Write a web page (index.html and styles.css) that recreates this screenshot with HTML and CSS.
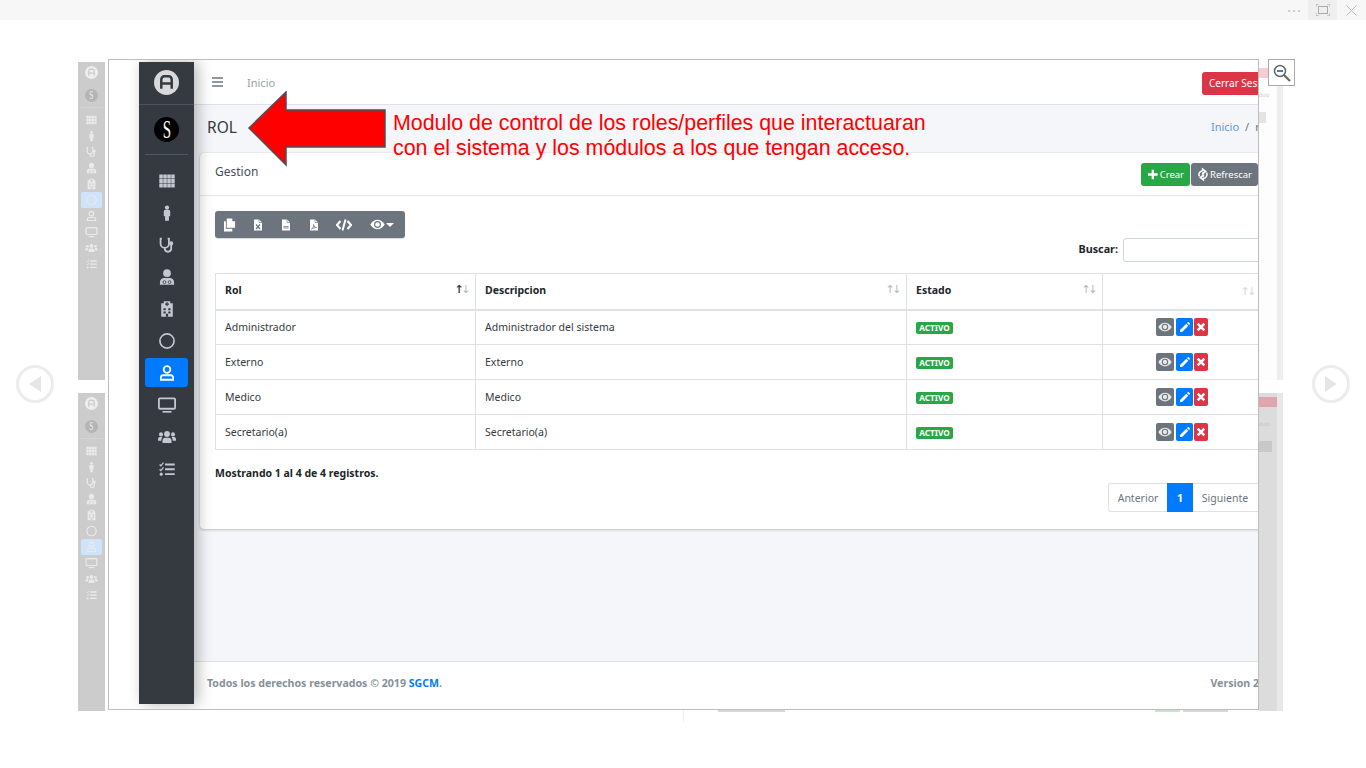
FILE: index.html
```html
<!DOCTYPE html>
<html lang="en">

<head>
  <meta charset="UTF-8">
  <meta name="viewport" content="width=device-width, initial-scale=1.0">
  <title>Rol</title>
  <link rel="stylesheet" href="styles.css">
</head>

<body>
  <svg class="defs" width="0" height="0">
    <symbol id="i-th" viewBox="-2 -2 28 28"><path d="M0 2h5.500v6.200H0zM6.200 2h5.500v6.200H6.200zM12.400 2h5.500v6.200h-5.500zM18.600 2H24v6.200h-5.400zM0 8.900h5.500v6.200H0zM6.200 8.900h5.500v6.200H6.200zM12.400 8.900h5.500v6.200h-5.500zM18.600 8.900H24v6.200h-5.400zM0 15.800h5.500V22H0zM6.200 15.800h5.500V22H6.200zM12.400 15.800h5.500V22h-5.500zM18.600 15.800H24V22h-5.400z" fill="currentColor"/></symbol>
    <symbol id="i-male" viewBox="-2 -2 28 28"><circle cx="12" cy="3.500" r="3.300" fill="currentColor"/><path d="M7 9.500a2.500 2.500 0 0 1 2.500-2.500h5A2.500 2.500 0 0 1 17 9.500V17h-2v7H9v-7H7z" fill="currentColor"/></symbol>
    <symbol id="i-steth" viewBox="-2 -2 28 28"><path d="M4 2H2v8a6.500 6.500 0 0 0 13 0V2h-2M8.500 16.500v1a5 5 0 0 0 10 0V12" fill="none" stroke="currentColor" stroke-width="2.800"/><circle cx="18.500" cy="9.500" r="3.200" fill="currentColor"/></symbol>
    <symbol id="i-md" viewBox="-2 -2 28 28"><circle cx="12" cy="6" r="6" fill="currentColor"/><path d="M1 24v-4a6.500 6.500 0 0 1 6.500-6.500h9A6.500 6.500 0 0 1 23 20v4z" fill="currentColor"/><circle cx="8" cy="20" r="2.200" fill="none" stroke="var(--cut, #343a40)" stroke-width="1.200"/><circle cx="16" cy="20" r="2.200" fill="none" stroke="var(--cut, #343a40)" stroke-width="1.200"/></symbol>
    <symbol id="i-hosp" viewBox="-2 -2 28 28"><path d="M7 0h10v3h4v21H3V3h4z" fill="currentColor"/><path d="M11 1.500h2v6h-2zM9 3.500h6v2H9zM6.500 11h3.500v3H6.500zM14 11h3.500v3H14zM6.500 16h3.500v3H6.500zM14 16h3.500v3H14zM10.300 19.500h3.400V24h-3.400z" fill="var(--cut, #343a40)"/></symbol>
    <symbol id="i-circle" viewBox="-2 -2 28 28"><circle cx="12" cy="12" r="11" fill="none" stroke="currentColor" stroke-width="2.600"/></symbol>
    <symbol id="i-user" viewBox="-2 -2 28 28"><circle cx="12" cy="6.500" r="5.200" fill="none" stroke="currentColor" stroke-width="2.800"/><path d="M6 15.500h12a3.500 3.500 0 0 1 3.500 3.500v3.500h-19V19A3.500 3.500 0 0 1 6 15.500z" fill="none" stroke="currentColor" stroke-width="2.800"/></symbol>
    <symbol id="i-desk" viewBox="0 0 24 24"><rect x="1.200" y="3.200" width="21.600" height="13.800" rx="1.500" fill="none" stroke="currentColor" stroke-width="2.400"/><path d="M6 20h12v2.200H6z" fill="currentColor"/></symbol>
    <symbol id="i-users" viewBox="0 0 24 24"><circle cx="12" cy="8" r="3.900" fill="currentColor"/><circle cx="4" cy="8.500" r="2.700" fill="currentColor"/><circle cx="20" cy="8.500" r="2.700" fill="currentColor"/><path d="M6 20v-3a4 4 0 0 1 4-4h4a4 4 0 0 1 4 4v3zM0 17v-2.500A2.500 2.500 0 0 1 2.500 12H6a6 6 0 0 0-1.500 5zM24 17v-2.500a2.500 2.500 0 0 0-2.500-2.500H18a6 6 0 0 1 1.500 5z" fill="currentColor"/></symbol>
    <symbol id="i-tasks" viewBox="-2 -2 28 28"><path d="M0.500 5l2 2L6.500 2M0.500 12.500l2 2 4-5" fill="none" stroke="currentColor" stroke-width="2"/><path d="M9 3.500h15v3H9zM9 11h15v3H9zM9 18.500h15v3H9z" fill="currentColor"/><circle cx="3" cy="20" r="2.400" fill="currentColor"/></symbol>
    <symbol id="i-logo-a" viewBox="0 0 24 24"><circle cx="12" cy="12" r="12" fill="var(--logo-bg, #d9d9d9)"/><path d="M7 18V9a3 3 0 0 1 3-3h4a3 3 0 0 1 3 3v9M7 13h10" fill="none" stroke="var(--cut, #343a40)" stroke-width="2.400"/></symbol>
    <symbol id="i-eye" viewBox="0 0 24 24"><path d="M0.500 12C3.500 7 7.500 4.500 12 4.500S20.500 7 23.500 12C20.500 17 16.500 19.500 12 19.500S3.500 17 0.500 12z" fill="currentColor"/><circle cx="12" cy="12" r="4.600" fill="none" stroke="#6c757d" stroke-width="1.800"/></symbol>
    <symbol id="i-pen" viewBox="0 0 24 24"><path d="M2 18L14.500 5.500l4 4L6 22H2zM16 4l1.500-1.500a1.500 1.500 0 0 1 2 0l2 2a1.500 1.500 0 0 1 0 2L20 8z" fill="currentColor"/></symbol>
    <symbol id="i-x" viewBox="0 0 24 24"><path d="M4 4l16 16M20 4L4 20" fill="none" stroke="currentColor" stroke-width="6"/></symbol>
    <symbol id="i-file" viewBox="0 0 24 24"><path d="M4 1h10l6 6v16H4z" fill="currentColor"/><path d="M14 1v6h6" fill="none" stroke="#6c757d" stroke-width="1.200"/></symbol>
  </svg>

  <div class="viewer-bar">
    <span class="bar-dots">&middot;&middot;&middot;</span>
    <span class="bar-full">
      <svg width="14" height="12" viewBox="0 0 14 12"><path d="M0 3V0h3M11 0h3v3M14 9v3h-3M3 12H0V9" fill="none" stroke="#aaa"/><rect x="2.500" y="2.500" width="9" height="7" fill="none" stroke="#aaa"/></svg>
    </span>
    <span class="bar-close">
      <svg width="11" height="11" viewBox="0 0 11 11"><path d="M0.500 0.500l10 10M10.500 0.500l-10 10" stroke="#bbb"/></svg>
    </span>
  </div>

  <!-- neighbouring slides peeking out behind the open one -->
  <div class="thumb thumb-top">
    <svg class="t-logo"><use href="#i-logo-a"/></svg>
    <span class="t-s"><span>S</span></span>
    <hr class="t-rule">
    <svg class="t-ico"><use href="#i-th"/></svg>
    <svg class="t-ico"><use href="#i-male"/></svg>
    <svg class="t-ico"><use href="#i-steth"/></svg>
    <svg class="t-ico"><use href="#i-md"/></svg>
    <svg class="t-ico"><use href="#i-hosp"/></svg>
    <svg class="t-ico t-on"><use href="#i-circle"/></svg>
    <svg class="t-ico"><use href="#i-user"/></svg>
    <svg class="t-ico"><use href="#i-desk"/></svg>
    <svg class="t-ico"><use href="#i-users"/></svg>
    <svg class="t-ico"><use href="#i-tasks"/></svg>
  </div>
  <div class="thumb thumb-bottom">
    <svg class="t-logo"><use href="#i-logo-a"/></svg>
    <span class="t-s"><span>S</span></span>
    <hr class="t-rule">
    <svg class="t-ico"><use href="#i-th"/></svg>
    <svg class="t-ico"><use href="#i-male"/></svg>
    <svg class="t-ico"><use href="#i-steth"/></svg>
    <svg class="t-ico"><use href="#i-md"/></svg>
    <svg class="t-ico"><use href="#i-hosp"/></svg>
    <svg class="t-ico"><use href="#i-circle"/></svg>
    <svg class="t-ico t-on"><use href="#i-user"/></svg>
    <svg class="t-ico"><use href="#i-desk"/></svg>
    <svg class="t-ico"><use href="#i-users"/></svg>
    <svg class="t-ico"><use href="#i-tasks"/></svg>
  </div>
  <div class="side side-top">
    <span class="side-red"></span>
    <span class="side-txt">dulo</span>
    <span class="side-grey"></span>
  </div>
  <div class="side side-bottom">
    <span class="side-red"></span>
    <span class="side-txt">dulo</span>
    <span class="side-grey"></span>
  </div>
  <div class="peek peek-a"></div>
  <div class="peek peek-b"></div>
  <div class="peek peek-c"></div>
  <div class="peek peek-line"></div>

  <button class="nav-arrow nav-prev"><svg width="12" height="16" viewBox="0 0 12 16"><path d="M12 0v16L0 8z" fill="#e6e6e6"/></svg></button>
  <button class="nav-arrow nav-next"><svg width="12" height="16" viewBox="0 0 12 16"><path d="M0 0v16l12-8z" fill="#e6e6e6"/></svg></button>

  <button class="zoom-btn">
    <svg width="18" height="18" viewBox="0 0 18 18"><circle cx="7" cy="7" r="5.500" fill="#fff" stroke="#666" stroke-width="1.500"/><path d="M11 11l6 6" stroke="#666" stroke-width="2.200"/><path d="M4 7h6" stroke="#4a7ebb" stroke-width="2"/></svg>
  </button>

  <div class="frame">
    <div class="app">
      <aside class="sidebar">
        <div class="brand">
          <svg class="logo"><use href="#i-logo-a"/></svg>
        </div>
        <div class="profile">
          <span class="logo-s"><span>S</span></span>
        </div>
        <nav class="menu">
          <a class="menu-item"><svg><use href="#i-th"/></svg></a>
          <a class="menu-item"><svg><use href="#i-male"/></svg></a>
          <a class="menu-item"><svg><use href="#i-steth"/></svg></a>
          <a class="menu-item"><svg><use href="#i-md"/></svg></a>
          <a class="menu-item"><svg><use href="#i-hosp"/></svg></a>
          <a class="menu-item"><svg><use href="#i-circle"/></svg></a>
          <a class="menu-item active"><svg><use href="#i-user"/></svg></a>
          <a class="menu-item"><svg><use href="#i-desk"/></svg></a>
          <a class="menu-item"><svg><use href="#i-users"/></svg></a>
          <a class="menu-item"><svg><use href="#i-tasks"/></svg></a>
        </nav>
      </aside>

      <div class="main">
        <header class="topbar">
          <svg class="burger" width="11" height="10" viewBox="0 0 11 10"><path d="M0 1h11M0 5h11M0 9h11" stroke="#6c757d" stroke-width="1.400"/></svg>
          <a class="top-link">Inicio</a>
          <a class="btn-logout">Cerrar Sesion</a>
        </header>

        <section class="page-head">
          <h1>ROL</h1>
          <div class="crumbs"><a>Inicio</a><span class="crumb-sep">/</span><span>rol</span></div>
        </section>

        <section class="content">
          <div class="card">
            <div class="card-head">
              <h3>Gestion</h3>
              <div class="head-btns">
                <a class="btn btn-green">
                  <svg width="11" height="11" viewBox="0 0 11 11"><path d="M5.500 0v11M0 5.500h11" stroke="#fff" stroke-width="2.600"/></svg>Crear
                </a>
                <a class="btn btn-grey">
                  <svg width="13" height="15" viewBox="0 0 13 15"><path d="M2 10A5 5 0 0 1 6 2.500V0.500L10 3.500 6 6.500V4.500" fill="none" stroke="#fff" stroke-width="2"/><path d="M11 5A5 5 0 0 1 7 12.500v2L3 11.500l4-3v2" fill="none" stroke="#fff" stroke-width="2"/></svg>Refrescar
                </a>
              </div>
            </div>

            <div class="card-body">
              <div class="tools">
                <a class="tool"><svg width="12" height="14" viewBox="0 0 13 14"><path d="M3 0h6l0 3h3v7H3z" fill="#fff"/><path d="M0 3h2v8h7v3H0z" fill="#fff"/></svg></a>
                <a class="tool"><svg width="12" height="14" viewBox="0 0 24 24"><use href="#i-file"/><path d="M8 11l8 9M16 11l-8 9" stroke="#6c757d" stroke-width="2.400"/></svg></a>
                <a class="tool"><svg width="12" height="14" viewBox="0 0 24 24"><use href="#i-file"/><path d="M7 15h10M7 18h10" stroke="#6c757d" stroke-width="1.600"/></svg></a>
                <a class="tool"><svg width="12" height="14" viewBox="0 0 24 24"><use href="#i-file"/><path d="M7 20c3-1 5-6 4-9 1 4 3 6 6 6-4 0-7 1-10 3z" fill="none" stroke="#6c757d" stroke-width="1.500"/></svg></a>
                <a class="tool tool-code"><svg width="16" height="12" viewBox="0 0 16 12"><path d="M4.500 2L1 6l3.500 4M11.500 2L15 6l-3.500 4M9.500 0.500L6.500 11.500" fill="none" stroke="#fff" stroke-width="2"/></svg></a>
                <a class="tool tool-eye"><svg width="15" height="15"><use href="#i-eye"/></svg><span class="caret"></span></a>
              </div>

              <div class="search-row">
                <label for="q">Buscar:</label>
                <input type="text" id="q">
              </div>

              <table class="grid">
                <colgroup>
                  <col class="c-rol"><col class="c-desc"><col class="c-state"><col>
                </colgroup>
                <thead>
                  <tr>
                    <th>Rol<span class="sort"><b>&uarr;</b>&darr;</span></th>
                    <th>Descripcion<span class="sort">&uarr;&darr;</span></th>
                    <th>Estado<span class="sort">&uarr;&darr;</span></th>
                    <th><span class="sort sort-faint">&uarr;&darr;</span></th>
                  </tr>
                </thead>
                <tbody>
                  <tr>
                    <td>Administrador</td>
                    <td>Administrador del sistema</td>
                    <td><span class="badge">ACTIVO</span></td>
                    <td class="acts">
                      <a class="act act-grey"><svg><use href="#i-eye"/></svg></a><a class="act act-blue"><svg><use href="#i-pen"/></svg></a><a class="act act-red"><svg><use href="#i-x"/></svg></a>
                    </td>
                  </tr>
                  <tr>
                    <td>Externo</td>
                    <td>Externo</td>
                    <td><span class="badge">ACTIVO</span></td>
                    <td class="acts">
                      <a class="act act-grey"><svg><use href="#i-eye"/></svg></a><a class="act act-blue"><svg><use href="#i-pen"/></svg></a><a class="act act-red"><svg><use href="#i-x"/></svg></a>
                    </td>
                  </tr>
                  <tr>
                    <td>Medico</td>
                    <td>Medico</td>
                    <td><span class="badge">ACTIVO</span></td>
                    <td class="acts">
                      <a class="act act-grey"><svg><use href="#i-eye"/></svg></a><a class="act act-blue"><svg><use href="#i-pen"/></svg></a><a class="act act-red"><svg><use href="#i-x"/></svg></a>
                    </td>
                  </tr>
                  <tr>
                    <td>Secretario(a)</td>
                    <td>Secretario(a)</td>
                    <td><span class="badge">ACTIVO</span></td>
                    <td class="acts">
                      <a class="act act-grey"><svg><use href="#i-eye"/></svg></a><a class="act act-blue"><svg><use href="#i-pen"/></svg></a><a class="act act-red"><svg><use href="#i-x"/></svg></a>
                    </td>
                  </tr>
                </tbody>
              </table>

              <p class="info">Mostrando 1 al 4 de 4 registros.</p>

              <div class="pager">
                <a class="page-prev">Anterior</a>
                <a class="page-cur">1</a>
                <a class="page-next">Siguiente</a>
              </div>
            </div>
          </div>
        </section>

        <footer class="foot">
          <span>Todos los derechos reservados &copy; 2019 <a>SGCM</a>.</span>
          <span>Version 2.0</span>
        </footer>
      </div>
    </div>

    <svg class="callout-arrow" width="142" height="78" viewBox="0 0 142 78">
      <path d="M2 37L39 1v18h99v37H39v18z" fill="#ff0000" stroke="#4a5058" stroke-width="1.500"/>
    </svg>
    <p class="callout-text">Modulo de control de los roles/perfiles que interactuaran<br>con el sistema y los módulos a los que tengan acceso.</p>
  </div>
</body>

</html>
```

FILE: styles.css
```css
* {
  box-sizing: border-box;
}

body {
  margin: 0;
  height: 768px;
  overflow: hidden;
  position: relative;
  background: #fff;
  font-family: "Noto Sans", sans-serif;
  font-size: 11px;
  color: #212529;
}

a {
  text-decoration: none;
}

.defs {
  position: absolute;
}

/* viewer chrome */
.viewer-bar {
  height: 20px;
  background: #f7f7f7;
  display: flex;
  justify-content: flex-end;
  align-items: center;
}

.bar-dots {
  margin-right: 6px;
  color: #c4c4c4;
  font-size: 15px;
  letter-spacing: 1px;
  line-height: 20px;
}

.bar-full {
  width: 29px;
  height: 20px;
  background: #efefef;
  display: flex;
  align-items: center;
  justify-content: center;
}

.bar-close {
  width: 29px;
  height: 20px;
  display: flex;
  align-items: center;
  justify-content: center;
}

.nav-arrow {
  position: absolute;
  top: 365px;
  width: 38px;
  height: 38px;
  border: 3px solid #ececec;
  border-radius: 50%;
  background: #fff;
  padding: 0;
  display: flex;
  align-items: center;
  justify-content: center;
}

.nav-prev {
  left: 16px;
}

.nav-next {
  left: 1312px;
}

.zoom-btn {
  position: absolute;
  left: 1268px;
  top: 59px;
  width: 27px;
  height: 27px;
  background: #fff;
  border: 1px solid #aaa;
  padding: 0;
  display: flex;
  align-items: center;
  justify-content: center;
}

/* neighbouring slides */
.thumb {
  position: absolute;
  left: 78px;
  width: 27px;
  background: #cccccc;
  color: #eaeaea;
  display: flex;
  flex-direction: column;
  align-items: center;
  --logo-bg: #eeeeee;
  --cut: #cccccc;
}

.thumb-top {
  top: 62px;
  height: 318px;
  padding-top: 4px;
}

.thumb-bottom {
  top: 393px;
  height: 318px;
  padding-top: 4px;
}

.t-logo {
  width: 13px;
  height: 13px;
  margin-bottom: 10px;
}

.t-s {
  width: 13px;
  height: 13px;
  line-height: 13px;
  border-radius: 50%;
  background: #b5b5b5;
  color: #eee;
  font-family: "Liberation Serif", serif;
  font-size: 12px;
  text-align: center;
}

.t-s span {
  display: inline-block;
  transform: scaleX(0.6);
}

.t-rule {
  width: 22px;
  margin: 5px 0 4px;
  border: 0;
  border-top: 1px solid #d4d4d4;
}

.t-ico {
  width: 21px;
  height: 16px;
  padding: 2px 4px;
  flex: none;
  border-radius: 2px;
}

.t-on {
  background: #cfe3fb;
}

.side {
  position: absolute;
  left: 1259px;
  width: 24px;
  height: 318px;
  border-right: 6px solid #eeeeee;
}

.side-top {
  top: 62px;
  background: #fdfdfd;
}

.side-bottom {
  top: 393px;
  background: #dcdcdc;
  border-right-color: #e8e8e8;
}

.side-red {
  display: block;
  width: 9px;
  height: 10px;
  margin-top: 6px;
  background: #f6cdd2;
}

.side-bottom .side-red {
  width: 18px;
  margin-top: 4px;
  background: #dfa5ac;
}

.side-txt {
  display: block;
  margin-top: 14px;
  font-size: 5px;
  line-height: 7px;
  color: #ccc;
}

.side-grey {
  display: block;
  width: 7px;
  height: 11px;
  margin-top: 13px;
  background: #e4e4e4;
}

.side-bottom .side-txt {
  color: #c4c4c4;
}

.side-bottom .side-grey {
  width: 13px;
  background: #c8c8c8;
}

.peek {
  position: absolute;
  top: 710px;
  height: 2px;
  background: #d8d8d8;
}

.peek-a {
  left: 718px;
  width: 67px;
}

.peek-b {
  left: 1155px;
  width: 25px;
  background: #c5e6cd;
}

.peek-c {
  left: 1183px;
  width: 45px;
}

.peek-line {
  left: 683px;
  width: 1px;
  height: 12px;
  background: #f0f0f0;
}

/* open slide */
.frame {
  position: absolute;
  left: 108px;
  top: 59px;
  width: 1151px;
  height: 651px;
  border: 1px solid #bdbdbd;
  background: #fff;
  overflow: hidden;
  padding: 2px 0 5px 30px;
}

.app {
  display: flex;
  height: 100%;
}

.sidebar {
  flex: 0 0 55px;
  background: #343a40;
  position: relative;
  z-index: 2;
  box-shadow: 4px 0 14px rgba(0, 0, 0, 0.28);
  color: #c2c7d0;
}

.brand {
  height: 43px;
  padding-bottom: 2px;
  border-bottom: 1px solid #4b545c;
  display: flex;
  align-items: center;
  justify-content: center;
}

.logo {
  width: 25px;
  height: 25px;
}

.profile {
  height: 50px;
  margin: 0 6px;
  border-bottom: 1px solid #4f5962;
  display: flex;
  align-items: center;
  justify-content: center;
}

.logo-s {
  width: 25px;
  height: 25px;
  line-height: 25px;
  border-radius: 50%;
  background: #000;
  color: #fff;
  font-family: "Liberation Serif", serif;
  font-size: 25px;
  text-align: center;
}

.logo-s span {
  display: inline-block;
  transform: scaleX(0.6);
}

.menu {
  padding: 11px 6px 0;
  display: flex;
  flex-direction: column;
  gap: 3px;
}

.menu-item {
  height: 29px;
  border-radius: 3px;
  display: flex;
  align-items: center;
  justify-content: center;
}

.menu-item svg {
  width: 18px;
  height: 18px;
}

.menu-item.active {
  background: #007bff;
  color: #fff;
}

.main {
  flex: 0 0 1089px;
  display: flex;
  flex-direction: column;
  background: #f4f6f9;
}

.topbar {
  height: 43px;
  flex: none;
  background: #fff;
  border-bottom: 1px solid #dee2e6;
  padding: 0 6px 0 18px;
  display: flex;
  align-items: center;
}

.burger {
  margin-top: -2px;
}

.top-link {
  margin: -2px 0 0 24px;
  color: #9a9fa5;
  font-size: 11px;
}

.btn-logout {
  margin-left: auto;
  padding: 0 7px;
  height: 23px;
  line-height: 23px;
  width: 75px;
  background: #dc3545;
  color: #fff;
  border-radius: 3px;
  font-size: 10px;
  white-space: nowrap;
}

.page-head {
  height: 48px;
  flex: none;
  padding: 0 14px 4px 13px;
  display: flex;
  align-items: center;
  justify-content: space-between;
}

.page-head h1 {
  margin: 0;
  font-size: 15.500px;
  font-weight: 400;
  color: #343a40;
}

.crumbs {
  margin-top: -1px;
  color: #6c757d;
  font-size: 11px;
  white-space: nowrap;
}

.crumbs a {
  color: #5b96ee;
}

.crumb-sep {
  margin: 0 6px;
}

.content {
  flex: 1;
  padding: 0 6px;
}

.card {
  background: #fff;
  border-radius: 4px;
  box-shadow: 0 0 1px rgba(0, 0, 0, 0.2), 0 1px 3px rgba(0, 0, 0, 0.2);
}

.card-head {
  height: 43px;
  padding: 10px 19px 0 15px;
  border-bottom: 1px solid #e4e6e9;
  display: flex;
  justify-content: space-between;
  align-items: flex-start;
}

.card-head h3 {
  margin: 0;
  font-size: 12px;
  font-weight: 400;
  line-height: 17px;
  color: #495057;
}

.head-btns {
  display: flex;
  gap: 1px;
}

.btn {
  height: 23px;
  border-radius: 3px;
  color: #fff;
  font-size: 9.500px;
  display: flex;
  align-items: center;
  gap: 2px;
  padding: 0 6px;
}

.btn-green {
  width: 49px;
  background: #28a745;
  padding-left: 7px;
}

.btn-grey {
  width: 67px;
  background: #6c757d;
  padding-left: 7px;
}

.card-body {
  padding: 15px 15px 17px;
}

.tools {
  width: 190px;
  height: 27px;
  background: #6c757d;
  border-radius: 3px;
  padding-left: 9px;
  display: flex;
  align-items: center;
  color: #fff;
  box-shadow: 0 1px 1px rgba(0, 0, 0, 0.15);
}

.tool {
  width: 28px;
  display: flex;
  align-items: center;
  color: #fff;
}

.tool-code {
  width: 34px;
}

.tool-eye {
  width: 30px;
}

.caret {
  margin-left: 1px;
  border-left: 4px solid transparent;
  border-right: 4px solid transparent;
  border-top: 4px solid #fff;
}

.search-row {
  height: 24px;
  margin-bottom: 11px;
  display: flex;
  justify-content: flex-end;
  align-items: center;
  gap: 5px;
}

.search-row label {
  margin-top: -3px;
  font-weight: 700;
  font-size: 10.800px;
}

.search-row input {
  width: 139px;
  height: 24px;
  border: 1px solid #ced4da;
  border-radius: 3px;
}

.grid {
  width: 1047px;
  table-layout: fixed;
  border-collapse: collapse;
  border: 1px solid #dee2e6;
}

.c-rol {
  width: 260px;
}

.c-desc {
  width: 431px;
}

.c-state {
  width: 196px;
}

.grid th,
.grid td {
  border: 1px solid #dee2e6;
  padding: 0 9px;
  text-align: left;
  white-space: nowrap;
}

.grid th {
  height: 36px;
  padding-bottom: 2px;
  border-bottom-width: 2px;
  font-size: 10.500px;
  font-weight: 700;
  position: relative;
}

.grid td {
  height: 35px;
  font-size: 10.500px;
  color: #343a40;
}

.sort {
  position: absolute;
  right: 5px;
  top: 9px;
  font-family: "DejaVu Sans", sans-serif;
  font-size: 11px;
  line-height: 14px;
  letter-spacing: -2.500px;
  padding-right: 2px;
  font-weight: 400;
  color: #b4b8bd;
}

.sort b {
  color: #343a40;
  font-weight: 700;
}

.sort-faint {
  color: #d8dadd;
  top: 11px;
}

.badge {
  display: inline-block;
  height: 12px;
  line-height: 12px;
  width: 37px;
  background: #28a745;
  color: #fff;
  border-radius: 2px;
  font-size: 8.200px;
  font-weight: 700;
  text-align: center;
  vertical-align: middle;
}

.grid td.acts {
  padding: 0;
  text-align: center;
  font-size: 0;
}

.act {
  display: inline-flex;
  height: 18px;
  align-items: center;
  justify-content: center;
  border-radius: 2px;
  color: #fff;
  vertical-align: middle;
}

.act svg {
  width: 12px;
  height: 12px;
}

.act-grey {
  width: 18px;
  margin-right: 2px;
  background: #6c757d;
  color: #e8e8e8;
}

.act-grey svg {
  width: 14px;
  height: 14px;
}

.act-blue {
  width: 17px;
  margin-right: 1px;
  background: #007bff;
}

.act-red {
  width: 14px;
  background: #dc3545;
}

.act-red svg {
  width: 10px;
  height: 10px;
}

.info {
  margin: 15px 0 0;
  height: 18px;
  line-height: 17px;
  font-weight: 700;
  font-size: 10.500px;
}

.pager {
  display: flex;
  justify-content: flex-end;
  height: 29px;
  font-size: 10.500px;
  color: #6c757d;
}

.pager a {
  display: flex;
  align-items: center;
  justify-content: center;
}

.page-prev {
  width: 59px;
  border: 1px solid #dee2e6;
  border-right: 0;
  border-radius: 3px 0 0 3px;
}

.page-cur {
  width: 26px;
  background: #007bff;
  color: #fff;
  font-weight: 700;
}

.page-next {
  width: 69px;
  padding-right: 4px;
  border: 1px solid #dee2e6;
  border-left: 0;
  border-radius: 0 3px 3px 0;
}

.foot {
  height: 43px;
  flex: none;
  background: #fff;
  border-top: 1px solid #dee2e6;
  padding: 0 15px 0 13px;
  display: flex;
  align-items: center;
  justify-content: space-between;
  font-size: 10.600px;
  font-weight: 700;
  color: #869099;
}

.foot a {
  color: #007bff;
}

/* annotation pasted over the screenshot */
.callout-arrow {
  position: absolute;
  left: 138px;
  top: 31px;
  z-index: 3;
}

.callout-text {
  position: absolute;
  left: 284px;
  top: 51px;
  z-index: 3;
  margin: 0;
  font-family: "Liberation Sans", sans-serif;
  font-size: 21.400px;
  line-height: 25px;
  color: #ff0000;
  white-space: nowrap;
}
```
